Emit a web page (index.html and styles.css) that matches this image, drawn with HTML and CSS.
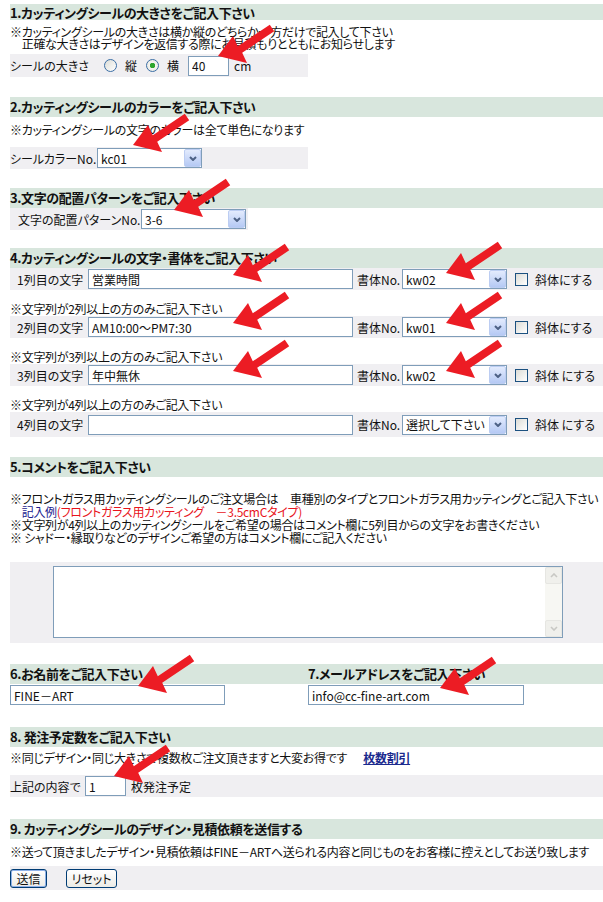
FILE: index.html
```html
<!DOCTYPE html>
<html lang="ja">
<head>
  <meta charset="UTF-8">
  <meta name="viewport" content="width=device-width, initial-scale=1.0">
  <title>カッティングシール デザイン・見積依頼</title>
  <link rel="stylesheet" href="styles.css">
</head>
<body>
  <svg class="defs" width="0" height="0">
    <defs>
      <polygon id="arrow" points="2,32 31,39 26.2,28.8 58.2,7.3 53.8,0.7 21.8,22.2 17,12"/>
      <polyline id="chev-down" points="1,1 4,4 7,1"/>
      <polyline id="chev-up" points="1,4 4,1 7,4"/>
    </defs>
  </svg>

  <form class="order">
    <section class="block sec1">
      <h2 class="title title-first">1.カッティングシールの大きさをご記入下さい</h2>
      <p class="note note-double">※カッティングシールの大きさは横か縦のどちらか一方だけで記入して下さい<br>　正確な大きさはデザインを返信する際にお見積もりとともにお知らせします</p>
      <div class="field field-size">
        <span class="label label-size">シールの大きさ</span>
        <label class="opt"><input type="radio" name="dir"><span>縦</span></label>
        <label class="opt"><input type="radio" name="dir" checked><span>横</span></label>
        <input type="text" class="text text-size" value="40">
        <span class="unit">cm</span>
      </div>
    </section>

    <section class="block sec2">
      <h2 class="title">2.カッティングシールのカラーをご記入下さい</h2>
      <p class="note">※カッティングシールの文字のカラーは全て単色になります</p>
      <div class="field field-color">
        <span class="label label-color">シールカラーNo.</span>
        <span class="combo">
          <select><option>kc01</option></select>
          <span class="drop"><svg viewBox="0 0 8 5"><use href="#chev-down"/></svg></span>
        </span>
      </div>
    </section>

    <section class="block sec3">
      <h2 class="title">3.文字の配置パターンをご記入下さい</h2>
      <div class="field field-layout">
        <span class="label label-layout">文字の配置パターンNo.</span>
        <span class="combo">
          <select><option>3-6</option></select>
          <span class="drop"><svg viewBox="0 0 8 5"><use href="#chev-down"/></svg></span>
        </span>
      </div>
    </section>

    <section class="block sec4">
      <h2 class="title">4.カッティングシールの文字・書体をご記入下さい</h2>
      <div class="field field-line">
        <span class="label label-line">1列目の文字</span>
        <input type="text" class="text text-line" value="営業時間">
        <span class="font-label">書体No.</span>
        <span class="combo">
          <select><option>kw02</option></select>
          <span class="drop"><svg viewBox="0 0 8 5"><use href="#chev-down"/></svg></span>
        </span>
        <label class="check"><input type="checkbox"><span>斜体にする</span></label>
      </div>
      <p class="note note-gap">※文字列が2列以上の方のみご記入下さい</p>
      <div class="field field-line">
        <span class="label label-line">2列目の文字</span>
        <input type="text" class="text text-line" value="AM10:00～PM7:30">
        <span class="font-label">書体No.</span>
        <span class="combo">
          <select><option>kw01</option></select>
          <span class="drop"><svg viewBox="0 0 8 5"><use href="#chev-down"/></svg></span>
        </span>
        <label class="check"><input type="checkbox"><span>斜体にする</span></label>
      </div>
      <p class="note note-gap">※文字列が3列以上の方のみご記入下さい</p>
      <div class="field field-line">
        <span class="label label-line">3列目の文字</span>
        <input type="text" class="text text-line" value="年中無休">
        <span class="font-label">書体No.</span>
        <span class="combo">
          <select><option>kw02</option></select>
          <span class="drop"><svg viewBox="0 0 8 5"><use href="#chev-down"/></svg></span>
        </span>
        <label class="check"><input type="checkbox"><span>斜体 にする</span></label>
      </div>
      <p class="note note-gap">※文字列が4列以上の方のみご記入下さい</p>
      <div class="field field-line field-last">
        <span class="label label-line">4列目の文字</span>
        <input type="text" class="text text-line" value="">
        <span class="font-label">書体No.</span>
        <span class="combo">
          <select><option>選択して下さい</option></select>
          <span class="drop"><svg viewBox="0 0 8 5"><use href="#chev-down"/></svg></span>
        </span>
        <label class="check"><input type="checkbox"><span>斜体 にする</span></label>
      </div>
    </section>

    <section class="block sec5">
      <h2 class="title">5.コメントをご記入下さい</h2>
      <p class="note note-comment">※フロントガラス用カッティングシールのご注文場合は　車種別のタイプとフロントガラス用カッティングとご記入下さい<br>　<span class="sample">記入例</span><span class="sample-red">(フロントガラス用カッティング　－3.5cmCタイプ)</span><br>※文字列が4列以上のカッティングシールをご希望の場合はコメント欄に5列目からの文字をお書きください<br>※ シャドー・縁取りなどのデザインご希望の方はコメント欄にご記入ください</p>
      <div class="field field-comment">
        <div class="comment-box">
          <textarea></textarea>
          <div class="vscroll">
            <span class="sbtn"><svg viewBox="0 0 8 5"><use href="#chev-up"/></svg></span>
            <span class="sbtn"><svg viewBox="0 0 8 5"><use href="#chev-down"/></svg></span>
          </div>
        </div>
      </div>
    </section>

    <section class="block sec6 pair">
      <div class="col">
        <h2 class="title">6.お名前をご記入下さい</h2>
        <input type="text" class="text text-name" value="FINE－ART">
      </div>
      <div class="col">
        <h2 class="title">7.メールアドレスをご記入下さい</h2>
        <input type="text" class="text text-mail" value="info@cc-fine-art.com">
      </div>
    </section>

    <section class="block sec8">
      <h2 class="title">8. 発注予定数をご記入下さい</h2>
      <p class="note note-qty">※同じデザイン・同じ大きさで複数枚ご注文頂きますと大変お得です <a href="#" class="discount">枚数割引</a></p>
      <div class="field field-qty">
        <span class="label label-qty">上記の内容で</span>
        <input type="text" class="text text-qty" value="1">
        <span class="unit">枚発注予定</span>
      </div>
    </section>

    <section class="block sec9">
      <h2 class="title">9. カッティングシールのデザイン・見積依頼を送信する</h2>
      <p class="note note-send">※送って頂きましたデザイン・見積依頼はFINE－ARTへ送られる内容と同じものをお客様に控えとしてお送り致します</p>
      <div class="field field-send">
        <button type="submit" class="btn btn-submit">送信</button>
        <button type="reset" class="btn btn-reset">リセット</button>
      </div>
    </section>

    <svg class="arrow a1" viewBox="0 0 60 40"><use href="#arrow"/></svg>
    <svg class="arrow a2" viewBox="0 0 60 40"><use href="#arrow"/></svg>
    <svg class="arrow a3" viewBox="0 0 60 40"><use href="#arrow"/></svg>
    <svg class="arrow a4" viewBox="0 0 60 40"><use href="#arrow"/></svg>
    <svg class="arrow a5" viewBox="0 0 60 40"><use href="#arrow"/></svg>
    <svg class="arrow a6" viewBox="0 0 60 40"><use href="#arrow"/></svg>
    <svg class="arrow a7" viewBox="0 0 60 40"><use href="#arrow"/></svg>
    <svg class="arrow a8" viewBox="0 0 60 40"><use href="#arrow"/></svg>
    <svg class="arrow a9" viewBox="0 0 60 40"><use href="#arrow"/></svg>
    <svg class="arrow a10" viewBox="0 0 60 40"><use href="#arrow"/></svg>
    <svg class="arrow a11" viewBox="0 0 60 40"><use href="#arrow"/></svg>
    <svg class="arrow a12" viewBox="0 0 60 40"><use href="#arrow"/></svg>
  </form>
</body>
</html>
```

FILE: styles.css
```css
body {
  margin: 0;
  background: #ffffff;
  color: #111111;
  font-family: "Noto Sans CJK JP", "Noto Sans", sans-serif;
  font-size: 12px;
  font-feature-settings: "palt";
}
.defs {
  position: absolute;
}
.order {
  position: relative;
  width: 593px;
  padding: 4px 0 0 10px;
}
.title {
  margin: 0;
  height: 20px;
  line-height: 20px;
  background: #d8e6dd;
  font-size: 13px;
  font-weight: bold;
  letter-spacing: -0.4px;
  white-space: nowrap;
}
.title-first {
  height: 16px;
  line-height: 18px;
}
.note {
  margin: 6px 0 0;
  line-height: 14px;
  letter-spacing: -0.3px;
  white-space: nowrap;
}
.note-double {
  line-height: 12px;
}
.note-gap {
  margin-top: 12px;
}
.note-comment {
  margin: 0;
  padding-top: 15px;
  line-height: 13px;
}
.note-qty {
  margin-top: 4px;
}
.field {
  display: flex;
  align-items: center;
  height: 22px;
  background: #f0eff2;
  white-space: nowrap;
}
.label {
  flex: none;
  box-sizing: border-box;
}

/* section spacing */
.sec2 { margin-top: 20px; }
.sec3 { margin-top: 19px; }
.sec4 { margin-top: 18px; }
.sec5 { margin-top: 20px; }
.sec6 { margin-top: 21px; }
.sec8 { margin-top: 22px; }
.sec9 { margin-top: 22px; }

/* 1 */
.field-size {
  width: 298px;
  height: 23px;
  margin-top: 4px;
}
.label-size {
  width: 94px;
}
.opt {
  display: flex;
  align-items: center;
  margin-right: 9px;
}
.opt span {
  margin-left: 8px;
}
.text-size {
  width: 41px;
  margin-left: -1px;
}
.unit {
  margin-left: 5px;
}

/* 2, 3 */
.field-color {
  width: 298px;
  margin-top: 10px;
}
.label-color {
  width: 87px;
}
.field-layout {
  width: 238px;
}
.label-layout {
  width: 131px;
  padding-left: 8px;
}

/* 4 */
.label-line {
  width: 78px;
  padding-left: 7px;
}
.text-line {
  width: 265px;
}
.font-label {
  width: 49px;
  padding-left: 4px;
  box-sizing: border-box;
}
.field-last {
  height: 25px;
}
.check {
  display: flex;
  align-items: center;
  margin-left: 8px;
}
.check span {
  margin-left: 7px;
}

/* 5 */
.sample {
  color: #1c1c8f;
}
.sample-red {
  color: #e8141c;
}
.field-comment {
  height: 81px;
  margin-top: 18px;
  align-items: flex-start;
}
.comment-box {
  display: flex;
  box-sizing: border-box;
  width: 510px;
  height: 72px;
  margin: 4px 0 0 43px;
  border: 1px solid #7f9db9;
  background: #ffffff;
}
.comment-box textarea {
  flex: 1;
  margin: 0;
  padding: 2px;
  border: 0;
  outline: none;
  resize: none;
  font: inherit;
}
.vscroll {
  display: flex;
  flex-direction: column;
  justify-content: space-between;
  width: 17px;
  background: #f7f7f3;
}
.sbtn {
  display: flex;
  align-items: center;
  justify-content: center;
  box-sizing: border-box;
  height: 17px;
  border: 1px solid #e6e6e2;
  border-radius: 2px;
  background: #f0f0ec;
}
.sbtn svg {
  width: 8px;
  height: 5px;
  fill: none;
  stroke: #c8c8c4;
  stroke-width: 1.6;
}

/* 6, 7 */
.pair {
  display: grid;
  grid-template-columns: 298px 295px;
}
.pair .text {
  margin-top: 1px;
}
.text-name {
  width: 215px;
}
.text-mail {
  width: 216px;
}

/* 8 */
.discount {
  margin-left: 14px;
  color: #1b2a8e;
  font-weight: bold;
}
.field-qty {
  margin-top: 10px;
}
.label-qty {
  width: 75px;
}
.text-qty {
  width: 41px;
}

/* 9 */
.note-send {
  margin-top: 6px;
}
.field-send {
  height: 24px;
  margin-top: 7px;
}

/* controls */
.text {
  box-sizing: border-box;
  height: 20px;
  margin: 0;
  padding: 0 3px;
  border: 1px solid #7f9db9;
  background: #ffffff;
  color: #111111;
  font: inherit;
  font-size: 12px;
}
.combo {
  position: relative;
  display: inline-block;
  flex: none;
}
.combo select {
  display: block;
  box-sizing: border-box;
  width: 105px;
  height: 20px;
  margin: 0;
  padding: 0 18px 0 3px;
  border: 1px solid #7f9db9;
  border-radius: 0;
  background: #ffffff;
  color: #111111;
  font: inherit;
  -webkit-appearance: none;
  appearance: none;
}
.drop {
  position: absolute;
  top: 1px;
  right: 1px;
  display: flex;
  align-items: center;
  justify-content: center;
  box-sizing: border-box;
  width: 17px;
  height: 18px;
  border: 1px solid #bccdf2;
  border-radius: 2px;
  background: linear-gradient(#e3ebfd, #b5c9f4);
  pointer-events: none;
}
.drop svg {
  width: 8px;
  height: 5px;
  fill: none;
  stroke: #4d6185;
  stroke-width: 2;
}
input[type="radio"],
input[type="checkbox"] {
  box-sizing: border-box;
  width: 13px;
  height: 13px;
  margin: 0;
  border: 1px solid #1c5180;
  background: linear-gradient(135deg, #dcdcd6, #ffffff);
  -webkit-appearance: none;
  appearance: none;
}
input[type="radio"] {
  border-color: #3b6ea5;
  border-radius: 50%;
}
input[type="radio"]:checked {
  background: radial-gradient(circle, #2ea52e 0, #2ea52e 2.5px, #f4f4f0 3px, #e2e2dc 100%);
}
.btn {
  box-sizing: border-box;
  height: 19px;
  padding: 0;
  border: 1px solid #003c74;
  border-radius: 3px;
  background: linear-gradient(#ffffff, #ecebe6);
  color: #111111;
  font: inherit;
}
.btn-submit {
  width: 37px;
  box-shadow: inset 0 0 0 1px #8fb1e8;
}
.btn-reset {
  width: 51px;
  margin-left: 19px;
}

/* annotation arrows */
.arrow {
  position: absolute;
  width: 60px;
  height: 40px;
  fill: #ec1c24;
  pointer-events: none;
}
.a1 { left: 216px; top: 24px; }
.a2 { left: 131px; top: 113px; }
.a3 { left: 172px; top: 178px; }
.a4 { left: 231px; top: 243px; }
.a5 { left: 444px; top: 241px; }
.a6 { left: 231px; top: 291px; }
.a7 { left: 444px; top: 291px; }
.a8 { left: 231px; top: 339px; }
.a9 { left: 444px; top: 339px; }
.a10 { left: 136px; top: 654px; }
.a11 { left: 438px; top: 656px; }
.a12 { left: 112px; top: 744px; }
```
